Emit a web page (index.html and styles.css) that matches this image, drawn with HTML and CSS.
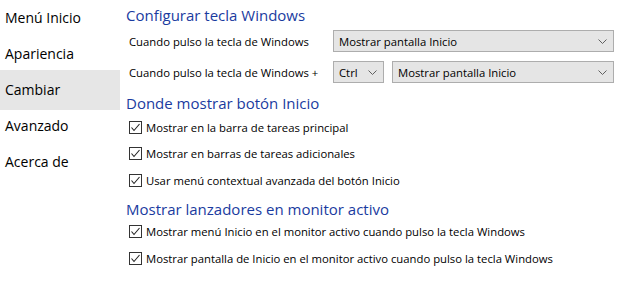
FILE: index.html
```html
<!DOCTYPE html>
<html lang="es">
<head>
<meta charset="utf-8">
<title>Configuración</title>
<link rel="stylesheet" href="styles.css">
</head>
<body>
<div class="app">
  <nav class="sidebar">
    <div class="nav-item">Menú Inicio</div>
    <div class="nav-item">Apariencia</div>
    <div class="nav-item selected">Cambiar</div>
    <div class="nav-item">Avanzado</div>
    <div class="nav-item">Acerca de</div>
  </nav>
  <main class="content">
    <h2 class="heading h-first">Configurar tecla Windows</h2>
    <div class="form-row row-first">
      <span class="label">Cuando pulso la tecla de Windows</span>
      <div class="select wide">
        <span>Mostrar pantalla Inicio</span>
        <svg class="chev" width="9" height="5" viewBox="0 0 9 5"><polyline points="0.5,0.5 4.5,4.5 8.5,0.5" fill="none" stroke="#606060" stroke-width="1"/></svg>
      </div>
    </div>
    <div class="form-row row-second">
      <span class="label">Cuando pulso la tecla de Windows +</span>
      <div class="select small">
        <span>Ctrl</span>
        <svg class="chev" width="9" height="5" viewBox="0 0 9 5"><polyline points="0.5,0.5 4.5,4.5 8.5,0.5" fill="none" stroke="#606060" stroke-width="1"/></svg>
      </div>
      <div class="select grow">
        <span>Mostrar pantalla Inicio</span>
        <svg class="chev" width="9" height="5" viewBox="0 0 9 5"><polyline points="0.5,0.5 4.5,4.5 8.5,0.5" fill="none" stroke="#606060" stroke-width="1"/></svg>
      </div>
    </div>

    <h2 class="heading h-second">Donde mostrar botón Inicio</h2>
    <div class="check-list">
      <label class="check"><span class="box"><svg width="11" height="11" viewBox="0 0 11 11"><polyline points="1.5,5.5 4,8.5 9.5,2" fill="none" stroke="#222" stroke-width="1.1"/></svg></span>Mostrar en la barra de tareas principal</label>
      <label class="check"><span class="box"><svg width="11" height="11" viewBox="0 0 11 11"><polyline points="1.5,5.5 4,8.5 9.5,2" fill="none" stroke="#222" stroke-width="1.1"/></svg></span>Mostrar en barras de tareas adicionales</label>
      <label class="check"><span class="box"><svg width="11" height="11" viewBox="0 0 11 11"><polyline points="1.5,5.5 4,8.5 9.5,2" fill="none" stroke="#222" stroke-width="1.1"/></svg></span>Usar menú contextual avanzada del botón Inicio</label>
    </div>

    <h2 class="heading h-third">Mostrar lanzadores en monitor activo</h2>
    <div class="check-list">
      <label class="check"><span class="box"><svg width="11" height="11" viewBox="0 0 11 11"><polyline points="1.5,5.5 4,8.5 9.5,2" fill="none" stroke="#222" stroke-width="1.1"/></svg></span>Mostrar menú Inicio en el monitor activo cuando pulso la tecla Windows</label>
      <label class="check"><span class="box"><svg width="11" height="11" viewBox="0 0 11 11"><polyline points="1.5,5.5 4,8.5 9.5,2" fill="none" stroke="#222" stroke-width="1.1"/></svg></span>Mostrar pantalla de Inicio en el monitor activo cuando pulso la tecla Windows</label>
    </div>
  </main>
</div>
</body>
</html>
```

FILE: styles.css
```css
html, body {
  margin: 0;
  padding: 0;
  background: #ffffff;
}
body {
  font-family: "Open Sans", "Noto Sans", sans-serif;
  color: #000;
  width: 623px;
  height: 308px;
  overflow: hidden;
}
.app {
  display: flex;
  height: 308px;
}
.sidebar {
  width: 120px;
  flex: none;
  display: flex;
  flex-direction: column;
}
.nav-item {
  height: 36px;
  line-height: 36px;
  padding-left: 5px;
  font-size: 14px;
  color: #000;
  white-space: nowrap;
}
.nav-item.selected {
  background: #e6e6e6;
  box-shadow: 0 -2px 0 #e6e6e6, 0 2px 0 #e6e6e6;
}
.content {
  flex: 1;
  padding-left: 6px;
  padding-right: 9px;
  display: flex;
  flex-direction: column;
}
.heading {
  margin: 0;
  font-weight: normal;
  font-size: 15px;
  color: #1a3ba0;
  line-height: 22px;
  white-space: nowrap;
}
.h-first { margin-top: 4px; }
.h-second { margin-top: 9px; }
.h-third { margin-top: 5px; line-height: 20px; }
.form-row {
  display: flex;
  align-items: center;
  height: 22px;
  padding-left: 3px;
  font-size: 11.3px;
}
.row-first { margin-top: 4px; }
.row-second { margin-top: 9px; }
.label {
  width: 204px;
  flex: none;
  white-space: nowrap;
}
.select {
  height: 22px;
  box-sizing: border-box;
  border: 1px solid #adadad;
  background: #e5e5e5;
  display: flex;
  align-items: center;
  justify-content: space-between;
  padding: 0 6px 0 5px;
  font-size: 11.3px;
}
.select.wide { flex: 1; }
.select.small { width: 51px; flex: none; margin-right: 8px; }
.select.grow { flex: 1; }
.chev { display: block; }
.check-list {
  display: flex;
  flex-direction: column;
  padding-left: 3px;
}
.check {
  display: flex;
  align-items: center;
  height: 26.5px;
  font-size: 11.3px;
  white-space: nowrap;
}
.box {
  width: 13px;
  height: 13px;
  box-sizing: border-box;
  border: 1px solid #333;
  background: #fff;
  margin-right: 4px;
  display: flex;
  align-items: center;
  justify-content: center;
  flex: none;
}
.box svg { display: block; }
```
